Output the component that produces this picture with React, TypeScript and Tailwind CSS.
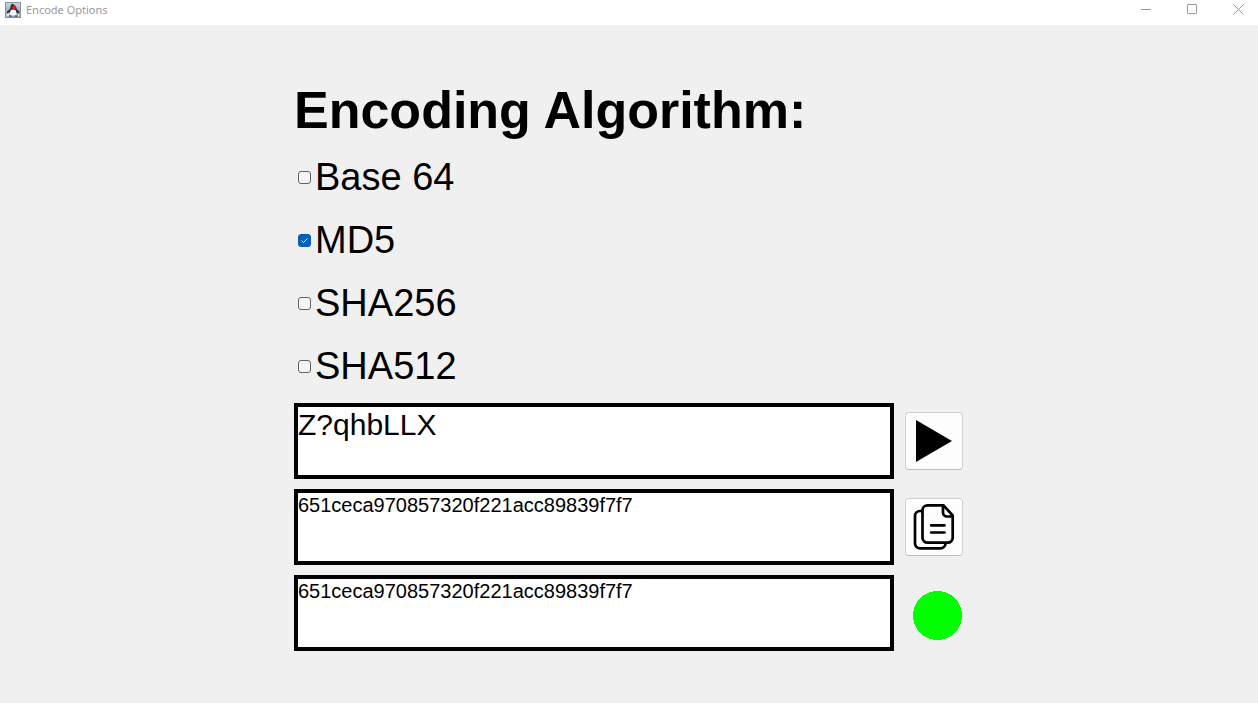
import { useState } from "react";

const algorithms = ["Base 64", "MD5", "SHA256", "SHA512"];

function AppIcon() {
  return (
    <svg viewBox="0 0 16 16" className="size-4" aria-hidden="true">
      <defs>
        <linearGradient id="tile" x1="0" y1="0" x2="0" y2="1">
          <stop offset="0" stopColor="#c6d6e3" />
          <stop offset="1" stopColor="#7d97ae" />
        </linearGradient>
      </defs>
      <rect x="0.5" y="0.5" width="15" height="15" fill="url(#tile)" stroke="#8493a1" />
      <path d="M7 1.500C5.500 3 5.500 5 5 7L2 9.500V11.500L5 10V12L11.500 13 12 10.500 14 11.500 14.500 9.500 12 7.500C11.500 4.500 9.500 2.500 7 1.500Z" fill="#2b3036" />
      <path d="M5.500 8.500C7 7 10 7 11 9L12 13.500H4.500Z" fill="#fafafa" />
      <path d="M1.500 12 4 11V14.500H1.500ZM13 12 14.500 12.500V14.500H12.500Z" fill="#dfe7ed" />
      <path d="M4 14H6.500M10 14H12.500" stroke="#2b3036" />
      <circle cx="9" cy="5.500" r="2" fill="#e8121c" />
    </svg>
  );
}

function TitleBar() {
  return (
    <header className="flex h-[25px] items-start justify-between bg-white pl-[5px] text-[#999999]">
      <div className="flex items-center gap-[5px]">
        <AppIcon />
        <h1 className="font-['Noto_Sans','Open_Sans',sans-serif] text-[11px] leading-[19px]">Encode Options</h1>
      </div>
      <div className="flex gap-[6px]">
        <button aria-label="Minimize" className="flex h-[18px] w-[40px] items-center justify-center">
          <svg viewBox="0 0 11 11" className="size-[11px]" stroke="currentColor" fill="none">
            <path d="M0 5.500H10" />
          </svg>
        </button>
        <button aria-label="Maximize" className="flex h-[18px] w-[40px] items-center justify-center">
          <svg viewBox="0 0 11 11" className="size-[11px]" stroke="currentColor" fill="none">
            <rect x="0.500" y="0.500" width="9" height="9" rx="0.500" />
          </svg>
        </button>
        <button aria-label="Close" className="flex h-[18px] w-[40px] items-center justify-center">
          <svg viewBox="0 0 11 11" className="size-[11px]" stroke="currentColor" fill="none">
            <path d="M0.500 0.500 10.500 10.500M10.500 0.500 0.500 10.500" />
          </svg>
        </button>
      </div>
    </header>
  );
}

function AlgorithmOption({ name, checked, onChange }: { name: string; checked: boolean; onChange: () => void }) {
  return (
    <label className="flex h-[53px] items-center gap-1 pl-1 text-[38px] leading-[53px]">
      <span className="grid size-[13px] place-items-center">
        <input
          type="checkbox"
          checked={checked}
          onChange={onChange}
          className="col-start-1 row-start-1 size-[13px] appearance-none rounded-[3px] border border-[#626262] bg-[#f5f5f5] checked:border-[#005fb8] checked:bg-[#005fb8]"
        />
        {checked && (
          <svg viewBox="0 0 13 13" className="pointer-events-none col-start-1 row-start-1 size-[13px]" fill="none" stroke="#ffffff">
            <path d="M3.500 6.500 5.500 8.500 9.500 4.500" />
          </svg>
        )}
      </span>
      {name}
    </label>
  );
}

const iconButton =
  "flex size-[58px] shrink-0 items-center justify-center rounded-[4px] border border-[#d0d0d0] border-b-[#bcbcbc] bg-[#fdfdfd]";
const textBox = "block h-[76px] min-w-0 flex-1 resize-none overflow-hidden border-4 border-black bg-white outline-none";

export default function App() {
  const [selected, setSelected] = useState("MD5");
  const [input, setInput] = useState("Z?qhbLLX");
  const [compare, setCompare] = useState("651ceca970857320f221acc89839f7f7");
  const output = "651ceca970857320f221acc89839f7f7";

  return (
    <div className="min-h-screen bg-[#f0f0f0] font-['Liberation_Sans',Arial,sans-serif] text-black">
      <TitleBar />
      <main className="mx-auto flex max-w-[670px] flex-col gap-[10px] pt-[54px] pr-px pb-[52px]">
        <fieldset className="flex flex-col gap-[10px]">
          <legend className="mb-[10px] text-[52px] leading-[62px] font-bold">Encoding Algorithm:</legend>
          {algorithms.map((name) => (
            <AlgorithmOption key={name} name={name} checked={selected === name} onChange={() => setSelected(name)} />
          ))}
        </fieldset>
        <div className="flex items-center gap-[11px]">
          <textarea
            aria-label="Text to encode"
            value={input}
            onChange={(e) => setInput(e.target.value)}
            className={`${textBox} text-[30px] leading-[35px]`}
          />
          <button aria-label="Encode" className={iconButton}>
            <svg viewBox="0 0 56 56" className="size-14">
              <path d="M10 7V49L46 28Z" fill="#000000" />
            </svg>
          </button>
        </div>
        <div className="flex items-center gap-[11px]">
          <textarea aria-label="Encoded text" value={output} readOnly className={`${textBox} text-[20px] leading-[24px]`} />
          <button aria-label="Copy encoded text" className={iconButton}>
            <svg
              viewBox="0 0 56 56"
              className="size-14"
              fill="none"
              stroke="#000000"
              strokeWidth="2.7"
              strokeLinecap="round"
              strokeLinejoin="round"
            >
              <path d="M21.500 6.300H37.500L46.700 16.500V38.700a5 5 0 0 1-5 5H21.500a5 5 0 0 1-5-5V11.300a5 5 0 0 1 5-5Z" />
              <path d="M37 6.500V13.500a4 4 0 0 0 4 4H46.500" />
              <path d="M16 12H14a5 5 0 0 0-5 5V44.300a5 5 0 0 0 5 5H34.500a5 5 0 0 0 5-5" />
              <path d="M25.200 26.400H38.500M25.200 33.500H38.500" />
            </svg>
          </button>
        </div>
        <div className="flex items-center gap-[11px]">
          <textarea
            aria-label="Text to compare"
            value={compare}
            onChange={(e) => setCompare(e.target.value)}
            className={`${textBox} text-[20px] leading-[24px]`}
          />
          <svg viewBox="0 0 58 58" className="size-[58px] shrink-0" role="img" aria-label="Comparison result">
            <circle cx="32.500" cy="31.500" r="24.500" fill={compare === output ? "#00ff00" : "#ff0000"} shapeRendering="crispEdges" />
          </svg>
        </div>
      </main>
    </div>
  );
}
